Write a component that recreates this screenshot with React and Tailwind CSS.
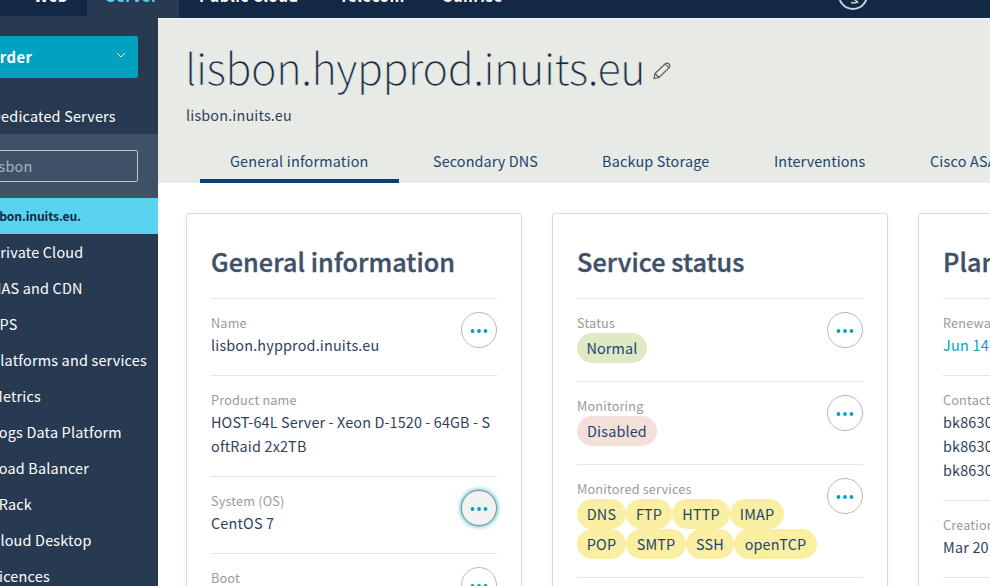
import React from "react";

const navItems = [
  "Private Cloud",
  "NAS and CDN",
  "VPS",
  "Platforms and services",
  "Metrics",
  "Logs Data Platform",
  "Load Balancer",
  "vRack",
  "Cloud Desktop",
  "Licences",
];

function MoreButton({ focused }) {
  return (
    <button
      className={
        "mt-[-1px] flex h-9 w-9 shrink-0 items-center justify-center rounded-full border " +
        (focused
          ? "border-[#8c8c8c] bg-[#f2f2f2] shadow-[0_0_5px_0px_#00a2bf]"
          : "border-[#b8b8b8] bg-white")
      }
    >
      <svg className="mt-px" width="18" height="4" viewBox="0 0 18 4" fill="#00a2bf">
        <circle cx="2.5" cy="2" r="1.9" />
        <circle cx="9" cy="2" r="1.9" />
        <circle cx="15.5" cy="2" r="1.9" />
      </svg>
    </button>
  );
}

function Row({ label, children, more, focused }) {
  return (
    <div className="flex items-start justify-between border-t border-[#e6e6e6] pt-[14px] pb-[18px]">
      <div className="text-[14.4px] leading-6 tracking-[0.17px] whitespace-nowrap text-[#2e3f5a]">
        <div className="text-[12.7px] leading-5 text-[#999]">{label}</div>
        {children}
      </div>
      {more && (
        <div className="h-0">
          <MoreButton focused={focused} />
        </div>
      )}
    </div>
  );
}

function Card({ title, children }) {
  return (
    <section className="h-[500px] w-[336px] shrink-0 rounded-[3px] border border-[#d9d9d9] bg-white px-6 shadow-[0_2px_6px_rgba(0,0,0,0.06)]">
      <h2 className="h-[84px] pt-[29px] text-[25.2px] leading-[36px] font-medium tracking-[0.08px] whitespace-nowrap text-[#3f5069] [-webkit-text-stroke:0.4px_#3f5069]">
        {title}
      </h2>
      {children}
    </section>
  );
}

function Pill({ className, children }) {
  return (
    <span
      className={
        "flex h-[30px] items-center justify-center rounded-full text-[14.4px] text-[#1a4470] " +
        className
      }
    >
      {children}
    </span>
  );
}

export default function App() {
  return (
    <div className="flex h-[586px] w-[990px] flex-col overflow-hidden bg-white font-['Noto_Sans_CJK_SC','Noto_Sans_CJK_JP',sans-serif]">
      <header className="flex h-[18px] shrink-0 bg-[#122844] text-[15.3px] leading-[18px] font-bold tracking-[0.4px] whitespace-nowrap text-white">
        <div className="h-4 w-[87px] shrink-0 pl-[34px]">
          <div className="-mt-[14px]">Web</div>
        </div>
        <div className="w-[92px] shrink-0 bg-[#283a52] pl-[19px] text-[#59d2ef]">
          <div className="-mt-[14px]">Server</div>
        </div>
        <div className="-mt-[14px] w-[160px] shrink-0 pl-5">Public Cloud</div>
        <div className="-mt-[14px] w-[104px] shrink-0">Telecom</div>
        <div className="-mt-[14px] w-[394px] shrink-0">Sunrise</div>
        <svg className="-mt-[20px] shrink-0" width="32" height="32" viewBox="0 0 32 32" fill="none">
          <circle cx="16" cy="15" r="14" stroke="#c9d0da" strokeWidth="2" />
          <path d="M15 18.5l3 1.5 2.500-1M14 22.500q3 1 6-.500M19 20l2 3" stroke="#c9d0da" strokeWidth="1.5" />
        </svg>
      </header>
      <div className="flex min-h-0 flex-1">
        <aside className="-mt-[2px] w-[158px] shrink-0 overflow-hidden bg-[#283a52] text-[14.4px] tracking-[0.2px] whitespace-nowrap text-white">
          <div className="mt-5 flex h-[42px] w-[138px] items-center rounded-r-[2px] bg-[#00a2bf]">
            <b className="-ml-[12px] w-[128px] text-[14.8px] tracking-[0.4px]">Order</b>
            <svg className="mb-[3px] shrink-0" width="10" height="7" viewBox="0 0 10 7" fill="none">
              <path d="M1 1l4 4 4-4" stroke="#fff" strokeWidth="1" />
            </svg>
          </div>
          <div className="flex h-14 items-center pt-5">
            <span className="-ml-[9px]">Dedicated Servers</span>
          </div>
          <div className="h-16 bg-[#405165] pt-4">
            <div className="-ml-2 flex h-8 w-[146px] items-center rounded-[2px] border border-[#bcc4cd] text-[#a9b2bc]">
              <span className="-ml-[3px]">lisbon</span>
            </div>
          </div>
          <div className="flex h-9 items-center bg-[#59d2ef] text-[12.2px] font-bold tracking-[-0.15px] text-[#122844]">
            <span className="-ml-[14px]">lisbon.inuits.eu.</span>
          </div>
          {navItems.map((item) => (
            <div key={item} className="flex h-9 items-center">
              <span className="-ml-[9px]">{item}</span>
            </div>
          ))}
        </aside>
        <main className="flex min-w-0 flex-1 flex-col overflow-hidden">
          <div className="flex h-[165px] shrink-0 flex-col border-t border-[#f6f7f4] bg-[#e8ebe5] pl-7">
            <div className="mt-[14px] flex h-[70px] items-center">
              <h1 className="-mt-[5px] -ml-px w-[468px] text-[43px] leading-[70px] font-light tracking-[-0.45px] whitespace-nowrap text-[#122844] [-webkit-text-stroke:0.5px_#e8ebe5]">
                lisbon.hypprod.inuits.eu
              </h1>
              <svg className="mt-[5px] shrink-0" width="18" height="18" viewBox="0 0 18 18" fill="none" stroke="#555" strokeWidth="1.1">
                <path d="M1 16.5l1-5L12.5 1.5q2-1 3.5.5t.5 3.5L6 15.5zM2 11.5l4 4M11.5 2.5q3.5.5 4 4" />
              </svg>
            </div>
            <div className="text-[14.4px] leading-6 tracking-[0.17px] text-[#2e3f5a]">lisbon.inuits.eu</div>
            <nav className="mt-[12px] ml-[14px] flex h-[44px] text-[14.4px] leading-[44px] tracking-[0.19px] whitespace-nowrap text-[#1a4470]">
              <div className="w-[199px] shrink-0 border-b-4 border-[#0e3f6e] pl-[30px]">General information</div>
              <div className="w-[169px] shrink-0 pl-[34px] tracking-[0.1px]">Secondary DNS</div>
              <div className="w-[172px] shrink-0 pl-[34px]">Backup Storage</div>
              <div className="w-[156px] shrink-0 pl-[34px] tracking-[0.1px]">Interventions</div>
              <div className="shrink-0 pl-[34px]">Cisco ASA firewall</div>
            </nav>
          </div>
          <div className="flex gap-[30px] pt-[30px] pl-7">
            <Card title="General information">
              <Row label="Name" more>lisbon.hypprod.inuits.eu</Row>
              <Row label="Product name">
                <span className="tracking-[0.12px]">HOST-64L Server - Xeon D-1520 - 64GB - S</span>
                <br />
                oftRaid 2x2TB
              </Row>
              <Row label="System (OS)" more focused>CentOS 7</Row>
              <Row label="Boot" more>Hard disk</Row>
            </Card>
            <Card title="Service status">
              <Row label="Status" more>
                <Pill className="w-[70px] bg-[#dfe9c3]">Normal</Pill>
              </Row>
              <Row label="Monitoring" more>
                <Pill className="w-[80px] bg-[#f5e0d9]">Disabled</Pill>
              </Row>
              <Row label="Monitored services" more>
                <div className="flex">
                  <Pill className="w-[49px] bg-[#faeea0]">DNS</Pill>
                  <Pill className="w-[46px] bg-[#faeea0]">FTP</Pill>
                  <Pill className="w-[58px] bg-[#faeea0]">HTTP</Pill>
                  <Pill className="w-[54px] bg-[#faeea0]">IMAP</Pill>
                </div>
                <div className="flex">
                  <Pill className="w-[49px] bg-[#faeea0]">POP</Pill>
                  <Pill className="w-[60px] bg-[#faeea0]">SMTP</Pill>
                  <Pill className="w-[48px] bg-[#faeea0]">SSH</Pill>
                  <Pill className="w-[83px] bg-[#faeea0]">openTCP</Pill>
                </div>
              </Row>
              <Row label="" />
            </Card>
            <Card title="Plan">
              <Row label="Renewal date">
                <span className="tracking-[0.25px] text-[#00a2bf]">Jun 14, 2018</span>
              </Row>
              <Row label="Contacts">
                bk8630-ovh
                <br />
                bk8630-ovh
                <br />
                bk8630-ovh
              </Row>
              <Row label="Creation date">
                <span className="tracking-[0.2px]">Mar 20, 2017</span>
              </Row>
              <Row label="" />
            </Card>
          </div>
        </main>
      </div>
    </div>
  );
}
